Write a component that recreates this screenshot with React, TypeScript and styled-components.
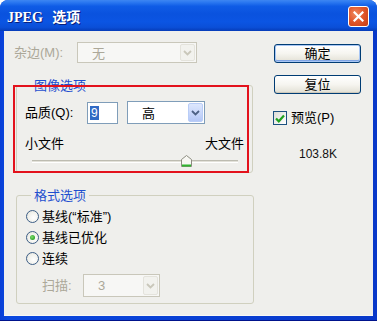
import React from "react";
import styled, { createGlobalStyle } from "styled-components";

const GlobalStyle = createGlobalStyle`
  html, body {
    margin: 0;
    padding: 0;
    background: #ffffff;
  }
  body {
    font-family: "Liberation Sans", "Noto Sans CJK SC", sans-serif;
  }
`;

const Window = styled.div`
  width: 377px;
  height: 321px;
  display: flex;
  flex-direction: column;
  background: linear-gradient(90deg, #0a3fd6 0%, #0a48e0 2%, #0838c9 100%);
  border-radius: 8px 8px 0 0;
  overflow: hidden;
  box-sizing: border-box;
  border-bottom: 1px solid #00138c;
`;

const TitleBar = styled.div`
  height: 31px;
  flex: none;
  display: flex;
  align-items: center;
  justify-content: space-between;
  padding: 0 8px 0 7px;
  box-sizing: border-box;
  background: linear-gradient(
    180deg,
    #3d86f2 0%,
    #2a77f0 8%,
    #0f5ce6 20%,
    #0a52de 45%,
    #0b55e3 70%,
    #0a4fd8 88%,
    #063cb8 100%
  );
`;

const Title = styled.span`
  font-family: "Liberation Serif", "Noto Sans CJK SC", serif;
  font-weight: bold;
  font-size: 14px;
  color: #ffffff;
  word-spacing: 6px;
  text-shadow: 1px 1px 0 #0a1c7a;
  margin-top: 1px;
`;

const CloseBtn = styled.div`
  width: 21px;
  height: 21px;
  box-sizing: border-box;
  border: 1px solid #ffffff;
  border-radius: 3px;
  background: radial-gradient(circle at 35% 35%, #f08a60 0%, #e2582c 45%, #c63c12 100%);
  display: flex;
  align-items: center;
  justify-content: center;
  margin-top: 2px;
`;

const Client = styled.div`
  flex: 1;
  margin: 0 4px 4px 4px;
  background: #efefec;
  display: flex;
  font-size: 13px;
  color: #000000;
  border-bottom: 1px solid #f8f8f6;
`;

const LeftCol = styled.div`
  width: 240px;
  padding: 11px 0 0 10px;
  display: flex;
  flex-direction: column;
`;

const RightCol = styled.div`
  padding: 13px 0 0 19px;
  display: flex;
  flex-direction: column;
`;

const Row = styled.div`
  display: flex;
  align-items: center;
`;

const Label = styled.span<{ $w?: number; $disabled?: boolean }>`
  width: ${(p) => (p.$w ? `${p.$w}px` : "auto")};
  flex: none;
  color: ${(p) => (p.$disabled ? "#aca899" : "#000000")};
  line-height: 16px;
  white-space: nowrap;
`;

const Combo = styled.div<{ $w: number; $h?: number; $disabled?: boolean }>`
  width: ${(p) => p.$w}px;
  height: ${(p) => p.$h ?? 22}px;
  box-sizing: border-box;
  border: 1px solid ${(p) => (p.$disabled ? "#c9c7ba" : "#7f9db9")};
  background: ${(p) => (p.$disabled ? "#f7f7f5" : "#ffffff")};
  display: flex;
  align-items: stretch;
  padding: 1px;
`;

const ComboValue = styled.span<{ $disabled?: boolean }>`
  flex: 1;
  display: flex;
  align-items: center;
  padding-left: 13px;
  color: ${(p) => (p.$disabled ? "#aca899" : "#000000")};
`;

const DropBtn = styled.span<{ $disabled?: boolean }>`
  width: 15px;
  flex: none;
  box-sizing: border-box;
  border-radius: 2px;
  border: 1px solid ${(p) => (p.$disabled ? "#e4e3dc" : "#b9cdf7")};
  background: ${(p) =>
    p.$disabled
      ? "#f2f2ee"
      : "linear-gradient(180deg, #dde7fd 0%, #c6d5fa 60%, #b4c7f6 100%)"};
  display: flex;
  align-items: center;
  justify-content: center;
`;

const TextBox = styled.div`
  width: 31px;
  height: 22px;
  box-sizing: border-box;
  border: 1px solid #7f9db9;
  background: #ffffff;
  display: flex;
  align-items: center;
  padding-left: 2px;
`;

const Selected = styled.span`
  background: #316ac5;
  color: #ffffff;
  font-size: 12px;
  line-height: 14px;
  padding: 0 1px;
`;

const GroupBox = styled.div<{ $h: number; $w: number }>`
  position: relative;
  width: ${(p) => p.$w}px;
  height: ${(p) => p.$h}px;
  box-sizing: border-box;
  margin: 22px 0 0 2px;
  border: 1px solid #d0d0bf;
  border-radius: 3px;
  display: flex;
  flex-direction: column;
`;

const GroupTitle = styled.span`
  position: absolute;
  top: -9px;
  left: 14px;
  padding: 0 3px;
  background: #efefec;
  color: #1f4fcf;
  line-height: 17px;
`;

const RedMark = styled.div`
  position: absolute;
  left: -4px;
  top: -1px;
  width: 236px;
  height: 88px;
  box-sizing: border-box;
  border: 2px solid #e3121c;
  pointer-events: none;
`;

const QualityRow = styled(Row)`
  padding: 15px 0 0 8px;
  gap: 9px;
`;

const SizeRow = styled(Row)`
  justify-content: space-between;
  padding: 12px 8px 0 8px;
`;

const SliderWrap = styled.div`
  position: relative;
  margin: 3px 0 0 15px;
  width: 206px;
  height: 14px;
`;

const Track = styled.div`
  position: absolute;
  left: 0;
  right: 0;
  top: 5px;
  height: 3px;
  box-sizing: border-box;
  border-top: 1px solid #bdbcb1;
  border-bottom: 1px solid #ffffff;
  background: #e2e1d9;
`;

const Thumb = styled.svg`
  position: absolute;
  top: 0;
`;

const RadioRow = styled(Row)`
  height: 21px;
  gap: 3px;
`;

const RadioCircle = styled.span<{ $checked?: boolean }>`
  width: 13px;
  height: 13px;
  box-sizing: border-box;
  border-radius: 50%;
  border: 1px solid #3d5e86;
  background: radial-gradient(circle at 60% 60%, #ffffff 0%, #f0f0ea 60%, #d8d8d0 100%);
  display: flex;
  align-items: center;
  justify-content: center;
  &::after {
    content: "";
    display: ${(p) => (p.$checked ? "block" : "none")};
    width: 5px;
    height: 5px;
    border-radius: 50%;
    background: radial-gradient(circle at 40% 40%, #7fdc6e 0%, #2fa52a 70%, #1f8a1f 100%);
  }
`;

const RadioList = styled.div`
  display: flex;
  flex-direction: column;
  padding: 10px 0 0 9px;
`;

const ScanRow = styled(Row)`
  margin: 5px 0 0 25px;
`;

const PushButton = styled.div<{ $default?: boolean }>`
  width: 87px;
  height: 19px;
  box-sizing: border-box;
  margin-left: 1px;
  border: 1px solid #003c74;
  border-radius: 3px;
  background: linear-gradient(180deg, #ffffff 0%, #f6f5f0 50%, #e6e4da 90%, #d6d0c5 100%);
  box-shadow: ${(p) =>
    p.$default ? "inset 0 0 0 1px #a8c6f4, inset 0 -1px 0 1px #7fa4e4" : "inset 0 -1px 0 #cdc9bc"};
  display: flex;
  align-items: center;
  justify-content: center;
  font-size: 13px;
  line-height: 15px;
  & + & {
    margin-top: 12px;
  }
`;

const CheckRow = styled(Row)`
  margin-top: 16px;
  gap: 4px;
`;

const CheckBox = styled.span`
  width: 14px;
  height: 14px;
  box-sizing: border-box;
  border: 1px solid #1c5180;
  background: linear-gradient(135deg, #dcdcd6 0%, #ffffff 100%);
  display: flex;
  align-items: center;
  justify-content: center;
`;

const FileSize = styled.span`
  margin: 21px 0 0 26px;
  font-family: "Liberation Sans", sans-serif;
  font-size: 12px;
  color: #111111;
`;

const Chevron = ({ color }: { color: string }) => (
  <svg width="9" height="6" viewBox="0 0 9 6">
    <path d="M1 1 L4.5 4.5 L8 1" fill="none" stroke={color} strokeWidth="1.8" />
  </svg>
);

const Select = ({
  w,
  h,
  value,
  disabled,
}: {
  w: number;
  h?: number;
  value: string;
  disabled?: boolean;
}) => (
  <Combo $w={w} $h={h} $disabled={disabled}>
    <ComboValue $disabled={disabled}>{value}</ComboValue>
    <DropBtn $disabled={disabled}>
      <Chevron color={disabled ? "#c9c7ba" : "#4d6185"} />
    </DropBtn>
  </Combo>
);

const Radio = ({ label, checked }: { label: string; checked?: boolean }) => (
  <RadioRow>
    <RadioCircle $checked={checked} />
    <Label>{label}</Label>
  </RadioRow>
);

export default function App() {
  return (
    <>
      <GlobalStyle />
      <Window>
        <TitleBar>
          <Title>JPEG 选项</Title>
          <CloseBtn>
            <svg width="11" height="11" viewBox="0 0 11 11">
              <path d="M1.5 1.5 L9.5 9.5 M9.5 1.5 L1.5 9.5" stroke="#ffffff" strokeWidth="2.2" strokeLinecap="square" />
            </svg>
          </CloseBtn>
        </TitleBar>
        <Client>
          <LeftCol>
            <Row>
              <Label $w={63} $disabled>
                杂边(M):
              </Label>
              <Select w={120} h={21} value="无" disabled />
            </Row>

            <GroupBox $w={237} $h={88}>
              <GroupTitle>图像选项</GroupTitle>
              <QualityRow>
                <Label $w={53}>品质(Q):</Label>
                <TextBox>
                  <Selected>9</Selected>
                </TextBox>
                <Select w={78} h={23} value="高" />
              </QualityRow>
              <SizeRow>
                <Label>小文件</Label>
                <Label>大文件</Label>
              </SizeRow>
              <SliderWrap>
                <Track />
                <Thumb width="11" height="12" viewBox="0 0 11 12" style={{ left: 149 }}>
                  <path d="M0.5 4.5 L5.5 0.5 L10.5 4.5 L10.5 11.5 L0.5 11.5 Z" fill="#f7f7f3" stroke="#8c8c80" />
                  <path d="M1 10.5 L10 10.5" stroke="#2fb52f" strokeWidth="2" />
                </Thumb>
              </SliderWrap>
              <RedMark />
            </GroupBox>

            <GroupBox $w={238} $h={109}>
              <GroupTitle>格式选项</GroupTitle>
              <RadioList>
                <Radio label={"基线(\u201C标准\u201D)"} />
                <Radio label="基线已优化" checked />
                <Radio label="连续" />
              </RadioList>
              <ScanRow>
                <Label $w={41} $disabled>
                  扫描:
                </Label>
                <Select w={77} h={23} value="3" disabled />
              </ScanRow>
            </GroupBox>
          </LeftCol>

          <RightCol>
            <PushButton $default>确定</PushButton>
            <PushButton>复位</PushButton>
            <CheckRow>
              <CheckBox>
                <svg width="10" height="9" viewBox="0 0 10 9">
                  <path d="M1 4.5 L3.8 7.3 L9 1.5" fill="none" stroke="#21a121" strokeWidth="2.2" />
                </svg>
              </CheckBox>
              <Label>预览(P)</Label>
            </CheckRow>
            <FileSize>103.8K</FileSize>
          </RightCol>
        </Client>
      </Window>
    </>
  );
}
